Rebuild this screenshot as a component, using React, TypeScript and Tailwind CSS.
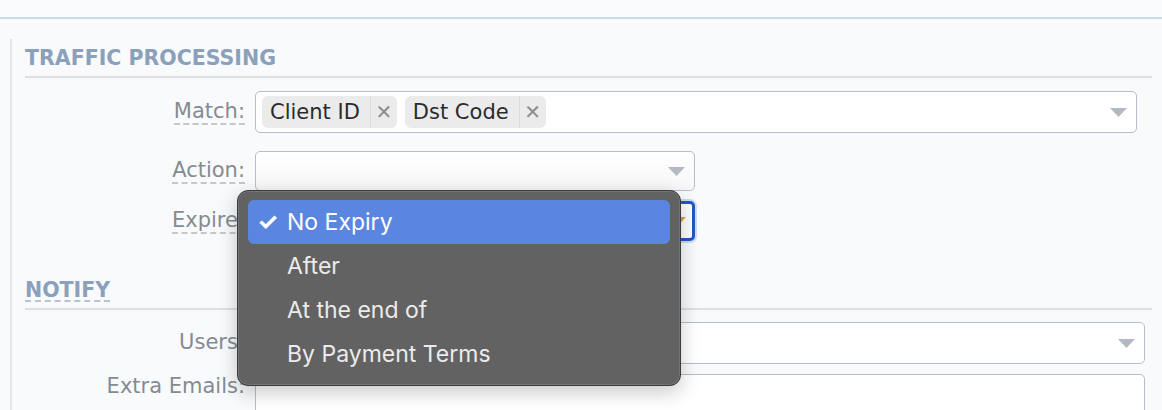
import React from 'react';

const label = "text-[21px] leading-[24px] text-[#868b91] [font-family:'DejaVu_Sans',sans-serif]";

function Arrow({ color = '#b3b9c2' }: { color?: string }) {
  return (
    <svg width="17" height="9" viewBox="0 0 17 9" className="shrink-0">
      <path d="M0 0 H17 L8.5 9 Z" fill={color} />
    </svg>
  );
}

function Tag({ text }: { text: string }) {
  return (
    <div className="flex h-[32px] items-stretch rounded-[6px] bg-[#ebebeb] text-[21px] text-[#2b2b2b]">
      <span className="flex items-center pl-[8px] pr-[10px] leading-none">{text}</span>
      <span className="flex w-[27px] items-center justify-center border-l border-[#dcdcdc] text-[20px] text-[#8d8d8d]">
        ✕
      </span>
    </div>
  );
}

function Row({ text, dashed = true, children, className = '' }: { text: string; dashed?: boolean; children: React.ReactNode; className?: string }) {
  return (
    <div className={`flex items-center ${className}`}>
      <div className="w-[220px] shrink-0 text-right">
        <span className={`${label} ${dashed ? 'border-b-2 border-dashed border-[#c4c8cd]' : ''}`}>{text}</span>
      </div>
      <div className="ml-[10px] flex-1">{children}</div>
    </div>
  );
}

const menuItems = ['No Expiry', 'After', 'At the end of', 'By Payment Terms'];

export default function App() {
  return (
    <div className="relative h-[410px] w-[1162px] overflow-hidden bg-[#f9fafc] [font-family:'DejaVu_Sans',sans-serif]">
      <div className="h-[19px] border-b-2 border-[#c9d9ec] bg-[#fafbfc]" />
      <div className="ml-[10px] mt-[20px] h-[400px] border-l-2 border-[#e0e5eb] pl-[13px] pr-[10px]">
        {/* traffic processing */}
        <div className="border-b-2 border-[#dedfe4] pb-[4px] pt-[9px]">
          <span className="text-[20.5px] font-bold leading-[20px] text-[#8aa0bb]">TRAFFIC PROCESSING</span>
        </div>

        <Row text="Match:" className="mt-[13px]">
          <div className="flex h-[42px] w-[882px] items-center rounded-[5px] border-[1.5px] border-[#b7bec7] bg-white pl-[6px] pr-[9px]">
            <div className="flex gap-[8px]">
              <Tag text="Client ID" />
              <Tag text="Dst Code" />
            </div>
            <div className="flex-1" />
            <Arrow />
          </div>
        </Row>

        <Row text="Action:" className="mt-[18px]">
          <div className="flex h-[40px] w-[440px] items-center justify-end rounded-[5px] border-[1.5px] border-[#b7bec7] bg-gradient-to-b from-white to-[#f7f7f7] pr-[9px]">
            <Arrow />
          </div>
        </Row>

        <Row text="Expire:" className="mt-[10px]">
          <div className="flex h-[40px] w-[440px] items-center justify-end rounded-[5px] border-[3px] border-[#2456c4] bg-white pr-[6px] shadow-[0_0_0_2px_#cddcf3]">
            <Arrow color="#d9a445" />
          </div>
        </Row>

        {/* notify */}
        <div className="mt-[33px] border-b-2 border-[#dedfe4] pb-[4px] pt-[6px]">
          <span className="inline-block border-b-2 border-dashed border-[#b9c2ce] text-[20.5px] font-bold leading-[20px] text-[#8aa0bb]">NOTIFY</span>
        </div>

        <Row text="Users:" dashed={false} className="mt-[12px]">
          <div className="flex h-[42px] w-[890px] items-center justify-end rounded-[5px] border-[1.5px] border-[#b7bec7] bg-white pr-[9px]">
            <Arrow />
          </div>
        </Row>

        <Row text="Extra Emails:" dashed={false} className="mt-[10px] items-start">
          <div className="h-[60px] w-[890px] rounded-[5px] border-[1.5px] border-[#b7bec7] bg-white" />
        </Row>
      </div>

      {/* open menu */}
      <div className="absolute left-[237px] top-[190px] w-[444px] rounded-[11px] border border-[#3b3b3b] bg-[#626262] px-[10px] py-[9px] shadow-[0_6px_20px_rgba(0,0,0,0.22),inset_0_0_0_1px_#747474] [font-family:Inter,sans-serif]">
        {menuItems.map((m, i) => (
          <div
            key={m}
            className={`flex h-[44px] items-center rounded-[6px] text-[23px] text-[#ebebeb] ${i === 0 ? 'bg-[#5a86e0] text-white' : ''}`}
          >
            <span className="w-[39px] pl-[9px] text-[24px] font-bold">{i === 0 ? '✓' : ''}</span>
            <span>{m}</span>
          </div>
        ))}
      </div>
    </div>
  );
}
